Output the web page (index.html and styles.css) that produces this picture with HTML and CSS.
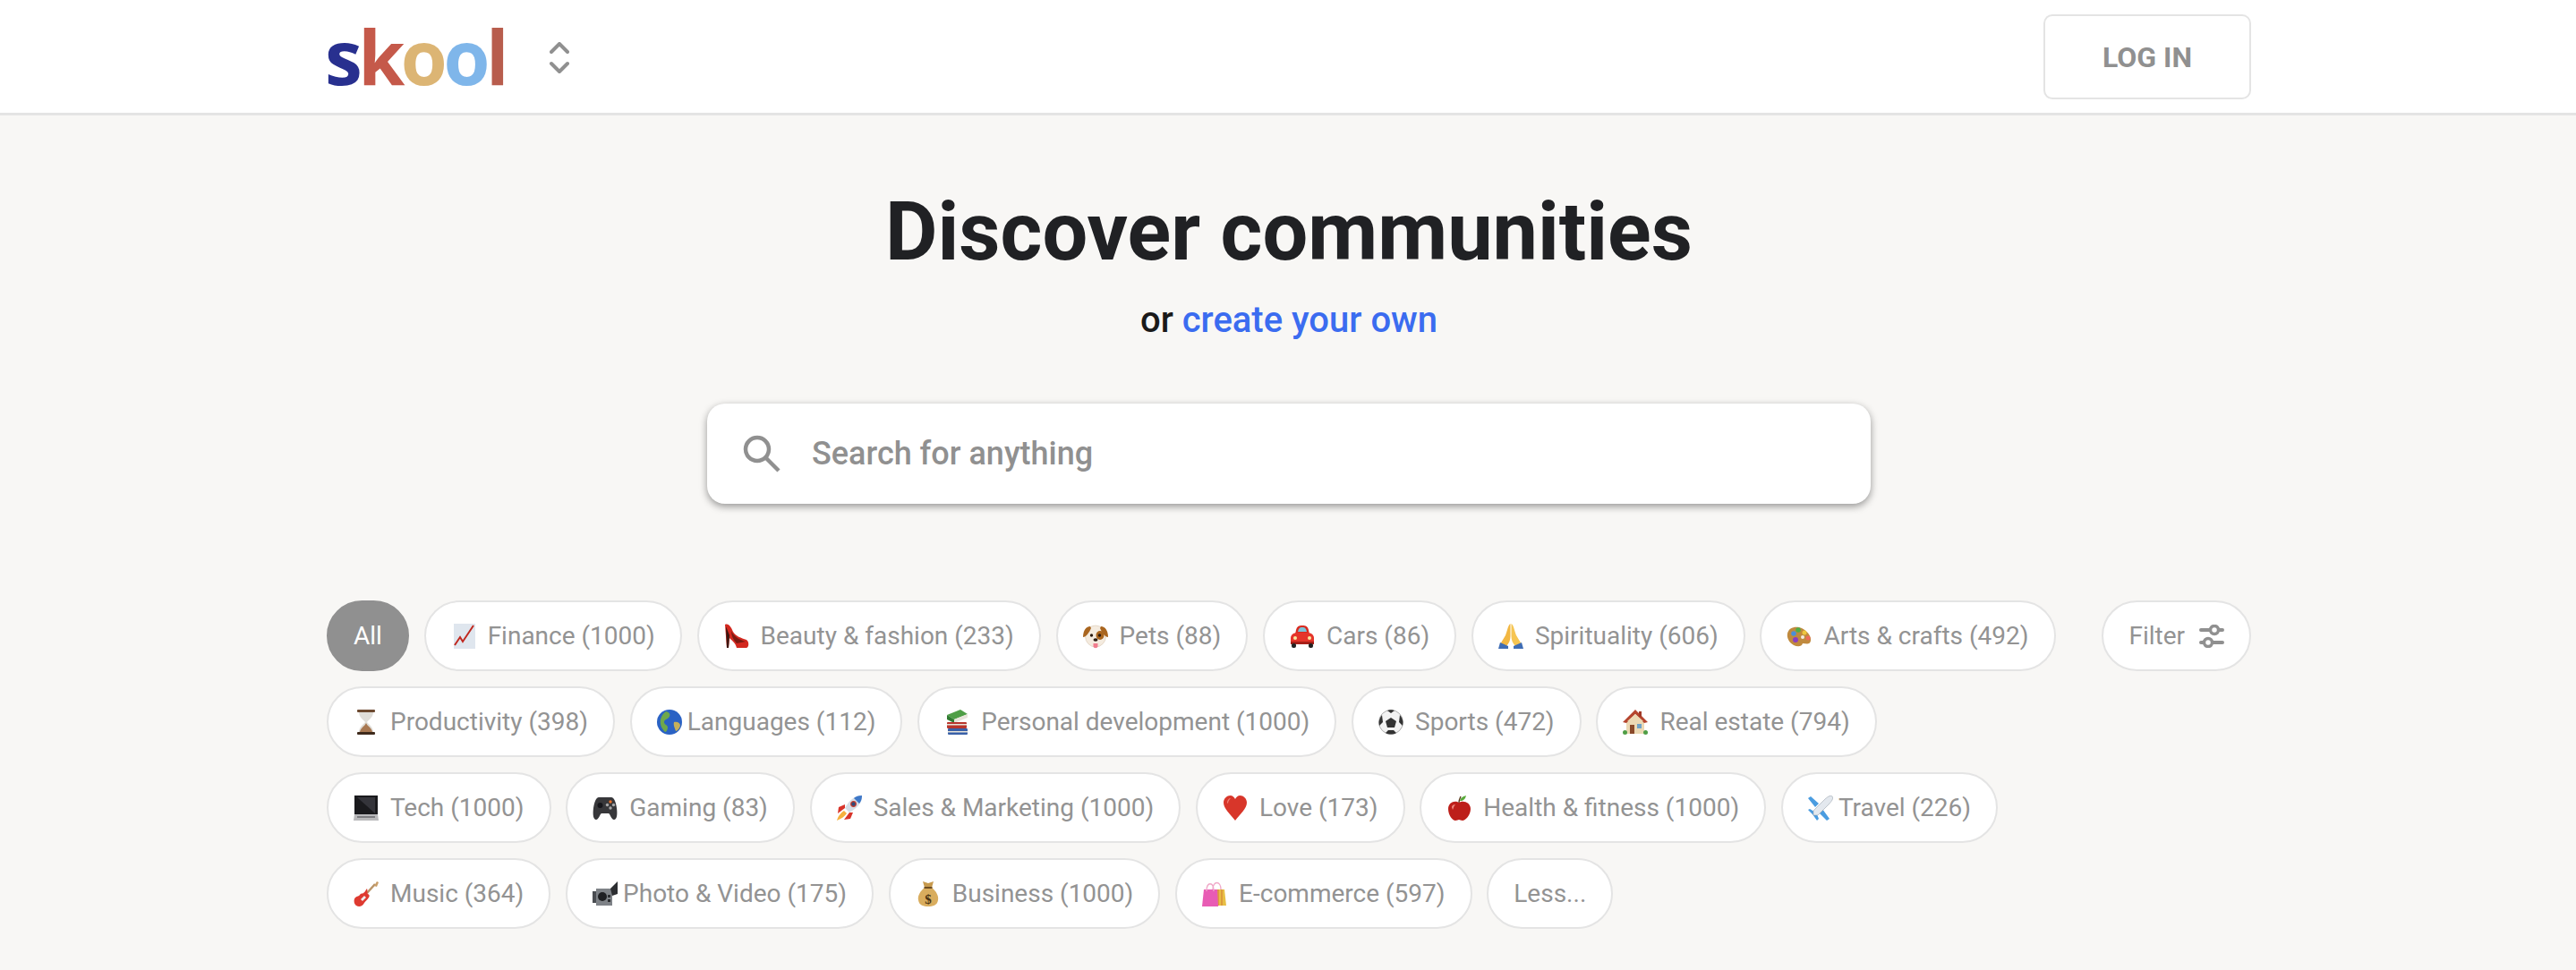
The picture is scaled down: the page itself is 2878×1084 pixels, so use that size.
FILE: index.html
```html
<!DOCTYPE html>
<html lang="en">
<head>
  <meta charset="UTF-8">
  <meta name="viewport" content="width=device-width, initial-scale=1.0">
  <title>Discover communities</title>
  <link rel="stylesheet" href="styles.css">
</head>
<body>
  <header class="topbar">
    <div class="topbar_inner">
      <div class="brand">
        <div class="logo"><span class="l1">s</span><span class="l2">k</span><span class="l3">o</span><span class="l4">o</span><span class="l5">l</span></div>
        <svg class="switcher" viewBox="0 0 22 35" fill="none" stroke="#909090" stroke-width="4" stroke-linecap="round" stroke-linejoin="round">
          <path d="M2 11 L11 2 L20 11"/>
          <path d="M2 24 L11 33 L20 24"/>
        </svg>
      </div>
      <button class="login">LOG IN</button>
    </div>
  </header>

  <main class="main">
    <h1 class="heading">Discover communities</h1>
    <p class="sub">or <a href="#">create your own</a></p>

    <div class="search">
      <svg class="search_icon" viewBox="0 0 42 42" fill="none" stroke="#909090" stroke-width="4.5">
        <circle cx="16" cy="16" r="13"/>
        <path d="M25.5 25.5 L40 40"/>
      </svg>
      <span class="placeholder">Search for anything</span>
    </div>

    <div class="filters">
      <div class="row">
        <button class="chip chip_on">All</button>
        <button class="chip">
          <svg class="emoji" viewBox="0 0 28 28"><rect x="3" y="0" width="24" height="28" fill="#dfe6ee"/><path d="M4 24 L10 15 L13 20 L25 2" fill="none" stroke="#c0281f" stroke-width="2"/></svg>
          Finance (1000)</button>
        <button class="chip">
          <svg class="emoji" viewBox="0 0 28 28"><path d="M1 1 C5 -1 8 4 10 9 C13 14 19 16 25 18 C28 20 28 26 25 27 L14 27 C13 22 9 19 6 16 L5 27 L3 27 Z" fill="#d3281f"/><path d="M2 3 L3 27 L5 27 L6 13 Z" fill="#3a1510"/><path d="M8 8 C11 15 18 18 24 20 L14 22 C10 18 8 13 8 8Z" fill="#7c1a12"/></svg>
          Beauty &amp; fashion (233)</button>
        <button class="chip">
          <svg class="emoji" viewBox="0 0 28 28"><ellipse cx="14" cy="14" rx="11.500" ry="12" fill="#f4ebdf" stroke="#d8c8b4" stroke-width=".6"/><path d="M8 3 C3 3 0 8 0 15 C3 15 7 10 9 5Z" fill="#a9651f"/><path d="M20 3 C25 3 28 8 28 15 C25 15 21 10 19 5Z" fill="#a9651f"/><ellipse cx="19" cy="13" rx="4.500" ry="5" fill="#a9651f"/><circle cx="9.500" cy="13" r="1.700" fill="#2a1a10"/><circle cx="18.500" cy="13" r="1.700" fill="#2a1a10"/><ellipse cx="14" cy="18" rx="2.500" ry="1.800" fill="#2a1a10"/><path d="M11.500 22 H16.500 V25 C16.500 28 11.500 28 11.500 25Z" fill="#f07d8e"/></svg>
          Pets (88)</button>
        <button class="chip">
          <svg class="emoji" viewBox="0 0 28 28"><path d="M7 7 C8 3 10 2 14 2 C18 2 20 3 21 7 L22 12 L6 12Z" fill="#d92b20"/><path d="M9 9 C10 5 11 4 14 4 C17 4 18 5 19 9Z" fill="#7cc3d8"/><path d="M1 16 C1 12 5 10 8 10 H20 C23 10 27 12 27 16 V23 H1Z" fill="#e5352a"/><circle cx="6" cy="16" r="2" fill="#fbe9a0"/><circle cx="22" cy="16" r="2" fill="#fbe9a0"/><rect x="1" y="20" width="26" height="3" fill="#a81f18"/><rect x="2" y="22" width="5" height="5" rx="2" fill="#222"/><rect x="21" y="22" width="5" height="5" rx="2" fill="#222"/></svg>
          Cars (86)</button>
        <button class="chip">
          <svg class="emoji" viewBox="0 0 28 28"><path d="M13.500 0 C11 1 10 8 8 13 L2 23 L9 25 C12 22 13.500 18 13.500 14Z" fill="#f2b742"/><path d="M14.500 0 C17 1 18 8 20 13 L26 23 L19 25 C16 22 14.500 18 14.500 14Z" fill="#f6c552"/><path d="M0 28 L2 21 L11 25 L11 28Z" fill="#3f6db5"/><path d="M28 28 L26 21 L17 25 L17 28Z" fill="#3f6db5"/></svg>
          Spirituality (606)</button>
        <button class="chip">
          <svg class="emoji" viewBox="0 0 28 28"><path d="M1 11 C2 4 11 2 17 5 C23 8 28 14 27 19 C26 24 22 22 18 22 C17 26 12 26 8 24 C3 21 0 16 1 11Z" fill="#c08a3e"/><circle cx="8" cy="11" r="2.800" fill="#4a8fd8"/><circle cx="13" cy="7" r="2.800" fill="#4fae46"/><circle cx="20" cy="10" r="2.500" fill="#eec63e"/><circle cx="10" cy="18" r="3" fill="#8a3fc0"/><circle cx="24" cy="16" r="2.500" fill="#ec6b5b"/><circle cx="18" cy="15" r="2" fill="#f4ece0"/></svg>
          Arts &amp; crafts (492)</button>
        <button class="chip chip_filter">Filter
          <svg class="sliders" viewBox="0 0 28 26" fill="none" stroke="#909090" stroke-width="4" stroke-linecap="round">
            <path d="M2 6 H12 M23 6 H26"/>
            <circle cx="17" cy="6" r="4.500" stroke-width="3.500"/>
            <path d="M2 20 H5 M16 20 H26"/>
            <circle cx="10" cy="20" r="4.500" stroke-width="3.500"/>
          </svg>
        </button>
      </div>

      <div class="row">
        <button class="chip">
          <svg class="emoji" viewBox="0 0 28 28"><rect x="4" y="0" width="20" height="3" rx="1" fill="#6d4a30"/><rect x="4" y="25" width="20" height="3" rx="1" fill="#3e2a1c"/><path d="M6 3 H22 C22 9 16 12 15 14 C16 16 22 19 22 25 H6 C6 19 12 16 13 14 C12 12 6 9 6 3Z" fill="#e0ded9"/><path d="M7 25 C8 20 13 18 14 15 C15 18 20 20 21 25Z" fill="#a87852"/></svg>
          Productivity (398)</button>
        <button class="chip">
          <svg class="emoji emoji_tight" viewBox="0 0 28 28"><circle cx="14" cy="14" r="14" fill="#2a62c4"/><path d="M10 2 C14 3 16 6 13 9 C11 11 8 11 8 14 C8 17 12 17 12 20 C12 23 10 25 9 25 C5 21 3 16 4 11 C5 7 7 4 10 2Z" fill="#6fa84a"/><path d="M19 14 C23 13 26 15 26 18 C25 22 22 24 21 24 C20 21 18 17 19 14Z" fill="#c5b05a"/></svg>
          Languages (112)</button>
        <button class="chip">
          <svg class="emoji" viewBox="0 0 28 28"><path d="M3 6 L18 0 L26 5 L11 11Z" fill="#4f9e46"/><path d="M3 6 V11 L11 15 L11 11Z" fill="#2f7a30"/><path d="M11 11 L26 5 V9 L11 15Z" fill="#e8e4da"/><rect x="3" y="14" width="22" height="7" rx="1" fill="#b8352c"/><rect x="3" y="16" width="22" height="1.500" fill="#e8e4da"/><rect x="4" y="21" width="22" height="7" rx="1" fill="#3860a8"/><rect x="4" y="24" width="22" height="1.500" fill="#e8e4da"/></svg>
          Personal development (1000)</button>
        <button class="chip">
          <svg class="emoji" viewBox="0 0 28 28"><circle cx="14" cy="14" r="13.500" fill="#f2f2f2" stroke="#999" stroke-width=".8"/><path d="M14 9 L20 13 L18 20 H10 L8 13Z" fill="#333"/><path d="M10 1 C12 0 16 0 18 1 L14 4Z M24 6 C27 10 28 13 27 18 L23 14Z M4 6 C1 10 0 13 1 18 L5 14Z M8 26 L11 23 H17 L20 26 C17 28 11 28 8 26Z" fill="#333"/></svg>
          Sports (472)</button>
        <button class="chip">
          <svg class="emoji" viewBox="0 0 28 28"><rect x="4" y="12" width="20" height="15" fill="#ecd9b4"/><path d="M14 0 L28 14 L24 15 L14 5 L4 15 L0 14Z" fill="#b5452e"/><path d="M14 5 L23 13 H5Z" fill="#ecd9b4"/><rect x="18" y="2" width="3" height="6" fill="#a13b28"/><rect x="8" y="17" width="5" height="10" fill="#8a4a2a"/><rect x="16" y="16" width="5" height="5" fill="#6fa3c8"/><circle cx="2.500" cy="25.500" r="2.500" fill="#4f9e46"/><circle cx="25.500" cy="25.500" r="2.500" fill="#4f9e46"/></svg>
          Real estate (794)</button>
      </div>

      <div class="row">
        <button class="chip">
          <svg class="emoji" viewBox="0 0 28 28"><rect x="1" y="0" width="26" height="22" fill="#1a1a1d"/><path d="M4 2 H24 V20 Z" fill="#34343a"/><path d="M1 21 H27 L28 28 H0Z" fill="#b9b9bb"/><rect x="4" y="23" width="20" height="2" fill="#7c7c80"/></svg>
          Tech (1000)</button>
        <button class="chip">
          <svg class="emoji" viewBox="0 0 28 28"><path d="M7 2 H21 C24 2 26 7 27 14 C28 22 27 27 24 27 C21 27 20 21 18 20 H10 C8 21 7 27 4 27 C1 27 0 22 1 14 C2 7 4 2 7 2Z" fill="#37373a"/><circle cx="8.500" cy="11" r="3" fill="#15151a"/><circle cx="20" cy="7" r="1.700" fill="#e8702a"/><circle cx="20" cy="14" r="1.700" fill="#aaa"/><circle cx="16.500" cy="10.500" r="1.700" fill="#aaa"/><circle cx="23.500" cy="10.500" r="1.700" fill="#aaa"/></svg>
          Gaming (83)</button>
        <button class="chip">
          <svg class="emoji" viewBox="0 0 28 28"><path d="M28 0 C20 0 14 5 9 14 L14 19 C23 14 28 8 28 0Z" fill="#d5dde6"/><path d="M28 0 C24 0 21 1 19 3 L25 9 C27 7 28 4 28 0Z" fill="#3e78c8"/><circle cx="18.500" cy="9.500" r="2.800" fill="#2f4a7a" stroke="#c83a2c" stroke-width="1.200"/><path d="M9 10 L2 13 L1 20 L9 14Z" fill="#d8342a"/><path d="M18 19 L15 26 L8 27 L14 19Z" fill="#d8342a"/><path d="M8 17 L11 20 C9 23 5 26 0 28 C1 23 5 19 8 17Z" fill="#f6b13e"/></svg>
          Sales &amp; Marketing (1000)</button>
        <button class="chip">
          <svg class="emoji" viewBox="0 0 28 28"><path d="M14 28 C9 21 1 15 1 8 C1 3 5 0 8.500 0 C11 0 13 2 14 4 C15 2 17 0 19.500 0 C23 0 27 3 27 8 C27 15 19 21 14 28Z" fill="#d8362a"/><path d="M5 8 C5 5 7 3 9 3 C7 5 6 7 6 9Z" fill="#f0857a"/></svg>
          Love (173)</button>
        <button class="chip">
          <svg class="emoji" viewBox="0 0 28 28"><path d="M14 8 C18 5 27 7 27 15 C27 22 21 28 18 28 C16 28 15 27 14 27 C13 27 12 28 10 28 C7 28 2 22 2 15 C2 7 10 5 14 8Z" fill="#bd1f1a"/><path d="M6 13 C6 11 8 10 10 10 C8 12 8 14 7 16Z" fill="#ee8a80"/><path d="M14 8 C14 5 15 3 16 1" fill="none" stroke="#5a3a1e" stroke-width="1.400"/><path d="M15 6 C16 2 19 1 22 0 C21 4 19 6 15 6Z" fill="#58a93a"/></svg>
          Health &amp; fitness (1000)</button>
        <button class="chip">
          <svg class="emoji emoji_tight" viewBox="0 0 28 28"><path d="M12 9 L3 1 L0 3 L8 13Z M16 15 L24 26 L21 28 L12 19Z" fill="#4a9ce0"/><path d="M7 18 L2 15 L0 16 L5 21 L10 28 L12 26 L10 21Z" fill="#4a9ce0"/><path d="M27 1 C29 3 26 7 23 10 L17 16 L11 22 L6 22 L6 17 L12 11 L18 5 C21 2 25 -1 27 1Z" fill="#e3e8ee" stroke="#9aa4ae" stroke-width=".6"/></svg>
          Travel (226)</button>
      </div>

      <div class="row">
        <button class="chip">
          <svg class="emoji" viewBox="0 0 28 28"><path d="M15 13 L24 3" stroke="#b89468" stroke-width="2.500" fill="none"/><path d="M23 5 L26 0 L28 1 L26 6Z" fill="#c99f6a"/><path d="M15 8 C16 11 15 13 16 14 C18 15 18 16 17 18 C15 21 13 22 12 24 C10 28 6 29 3 27 C0 25 0 20 2 18 C4 16 6 17 7 15 C8 13 10 14 11 13 C13 12 13 10 15 8Z" fill="#de3a30"/><path d="M8 20 L12 16 L14 18 L10 22Z" fill="#eee"/></svg>
          Music (364)</button>
        <button class="chip">
          <svg class="emoji emoji_tight" viewBox="0 0 28 28"><rect x="0" y="11" width="4" height="13" fill="#4a4d52"/><path d="M4 8 H22 V27 H4Z" fill="#7e8287"/><path d="M20 8 L28 0 V14 L22 16Z" fill="#2c2e31"/><circle cx="11" cy="17" r="5" fill="#1f2023"/><rect x="17" y="15" width="3" height="3" fill="#2c2e31"/><rect x="17" y="20" width="3" height="3" fill="#2c2e31"/></svg>
          Photo &amp; Video (175)</button>
        <button class="chip">
          <svg class="emoji" viewBox="0 0 28 28"><path d="M8 0 L14 2 L20 0 L18 7 H10Z" fill="#c79a4e"/><path d="M10 7 C5 11 2 16 3 21 C4 27 9 28 14 28 C19 28 24 27 25 21 C26 16 23 11 18 7Z" fill="#d9ad5e"/><rect x="9.500" y="6" width="9" height="2" fill="#6e4d22"/><text class="dollar" x="14" y="25" text-anchor="middle">$</text></svg>
          Business (1000)</button>
        <button class="chip">
          <svg class="emoji" viewBox="0 0 28 28"><path d="M14 9 H25 L27 27 H15Z" fill="#e8bf45"/><path d="M18 9 V27 M22 9 V27" stroke="#d8903a" stroke-width="1.500"/><path d="M2 9 H17 L18 28 H0Z" fill="#e85cb4"/><path d="M5 11 C5 0 13 0 13 11 M12 9 C12 -1 21 -1 21 9" fill="none" stroke="#f0a8c8" stroke-width="1.300"/></svg>
          E-commerce (597)</button>
        <button class="chip">Less...</button>
      </div>
    </div>
  </main>
</body>
</html>
```

FILE: styles.css
```css
body {
  margin: 0px;
  background-color: #f8f7f5;
  font-family: Roboto, "Liberation Sans", sans-serif;
}
.topbar {
  background-color: white;
  border-bottom: 3px solid #e4e4e4;
}
.topbar_inner {
  width: 2150px;
  height: 126px;
  margin-left: 365px;
  display: flex;
  align-items: center;
  justify-content: space-between;
}
.brand {
  display: flex;
  align-items: center;
  gap: 50px;
  margin-left: -2px;
}
.logo {
  font-family: "Open Sans", sans-serif;
  font-weight: 700;
  font-size: 84px;
  line-height: 126px;
  letter-spacing: -4.5px;
}
.l1 { color: #28308f; }
.l2 { color: #c5594a; }
.l3 { color: #dcb574; }
.l4 { color: #7fb6ea; }
.l5 { color: #b85d4d; }
.switcher {
  width: 22px;
  height: 35px;
  margin-top: 2px;
}
.login {
  width: 232px;
  height: 95px;
  margin-top: 1px;
  background-color: white;
  border: 2px solid #e4e4e4;
  border-radius: 10px;
  font-family: inherit;
  font-weight: 700;
  font-size: 32px;
  color: #909090;
}
.main {
  width: 2150px;
  margin-left: 365px;
  display: flex;
  flex-direction: column;
  align-items: center;
}
.heading {
  margin: 77px 0 0;
  font-size: 90px;
  line-height: 108px;
  font-weight: 700;
  color: #202124;
}
.sub {
  margin: 18px 0 0;
  font-size: 40px;
  line-height: 52px;
  font-weight: 500;
  color: #1a1a1a;
}
.sub a {
  color: #3b6cf0;
  text-decoration: none;
}
.search {
  width: 1300px;
  height: 112px;
  margin-top: 67px;
  box-sizing: border-box;
  padding-left: 40px;
  display: flex;
  align-items: center;
  gap: 35px;
  background-color: white;
  border-radius: 20px;
  box-shadow: 0 3px 8px rgba(0, 0, 0, 0.4);
}
.search_icon {
  width: 42px;
  height: 42px;
  flex: none;
}
.placeholder {
  font-size: 36px;
  font-weight: 500;
  color: #909090;
}
.filters {
  width: 100%;
  margin-top: 108px;
  display: flex;
  flex-direction: column;
  gap: 17px;
}
.row {
  display: flex;
  gap: 16.75px;
}
.chip {
  height: 79px;
  padding: 0 28px;
  display: flex;
  align-items: center;
  background-color: white;
  border: 2px solid #e4e4e4;
  border-radius: 40px;
  font-family: inherit;
  font-size: 28px;
  color: #939393;
  white-space: nowrap;
}
.chip_on {
  background-color: #909090;
  border-color: #909090;
  color: white;
}
.chip_filter {
  margin-left: auto;
}
.emoji {
  width: 28px;
  height: 28px;
  margin-right: 13px;
  flex: none;
}
.emoji_tight {
  margin-right: 6px;
}
.dollar {
  font-family: "Liberation Serif", serif;
  font-size: 15px;
  font-weight: 700;
  fill: #4a3212;
}
.sliders {
  width: 28px;
  height: 26px;
  margin-left: 16px;
}
```
